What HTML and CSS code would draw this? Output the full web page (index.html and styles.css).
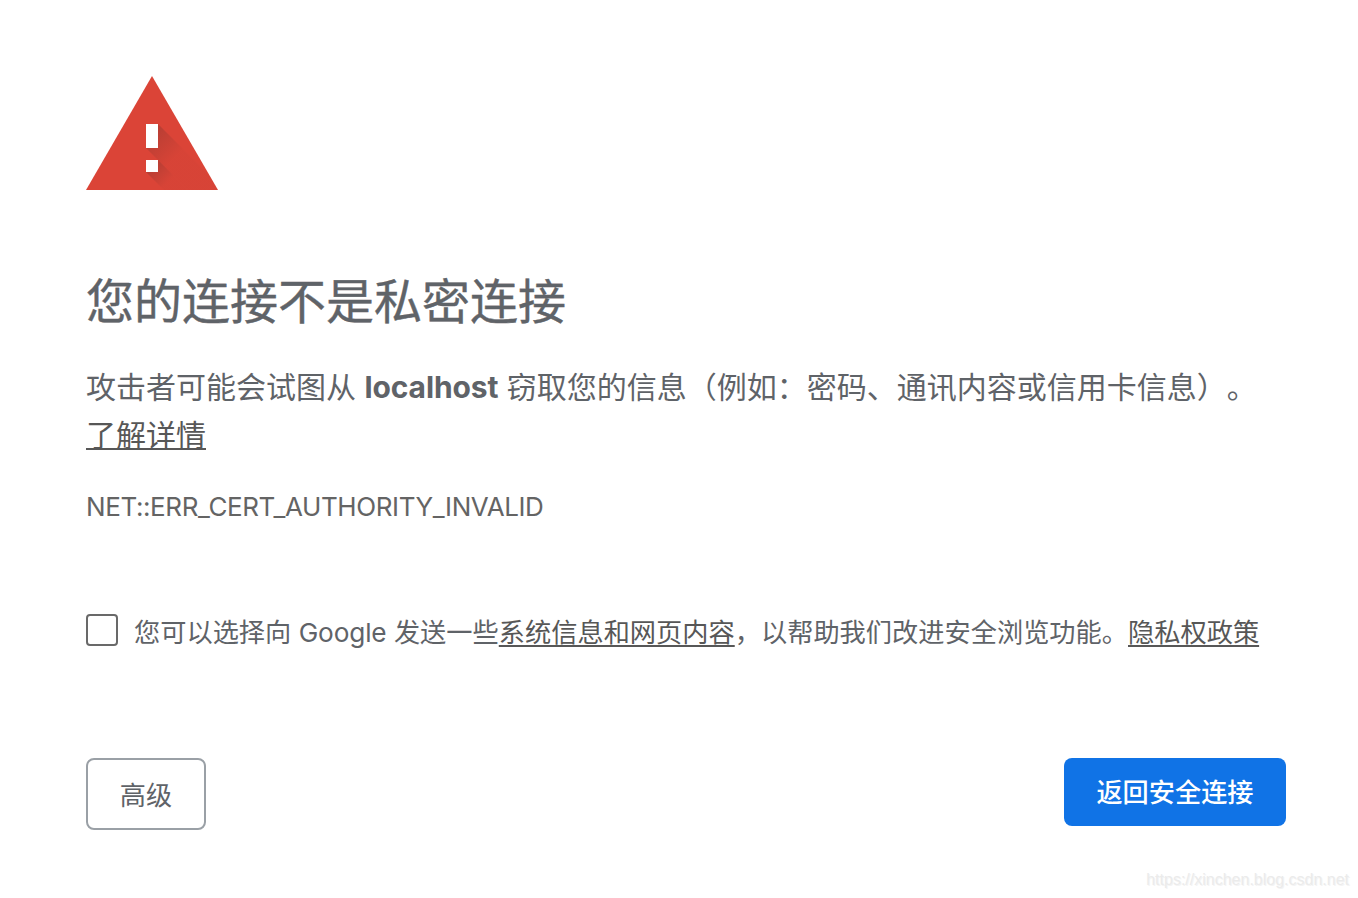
FILE: index.html
```
<!DOCTYPE html>
<html lang="zh-CN">
<head>
  <meta charset="UTF-8" />
  <meta name="viewport" content="width=device-width, initial-scale=1.0"/>
  <title>隐私设置错误</title>
  <link rel="stylesheet" href="styles.css">
</head>
<body>
  <div class="interstitial">
    <svg class="icon" viewBox="0 0 132 114" width="132" height="114">
      <defs>
        <linearGradient id="shade" gradientUnits="userSpaceOnUse" x1="66" y1="60" x2="88" y2="82">
          <stop offset="0" stop-color="#262626" stop-opacity="0.18"/>
          <stop offset="1" stop-color="#262626" stop-opacity="0.02"/>
        </linearGradient>
        <linearGradient id="shade-dot" gradientUnits="userSpaceOnUse" x1="66" y1="90" x2="82" y2="106">
          <stop offset="0" stop-color="#262626" stop-opacity="0.2"/>
          <stop offset="1" stop-color="#262626" stop-opacity="0.02"/>
        </linearGradient>
        <clipPath id="triangle">
          <path d="M0 114h132L66 0z"/>
        </clipPath>
      </defs>
      <path fill="#db4437" d="M0 114h132L66 0z"/>
      <g clip-path="url(#triangle)">
        <path fill="url(#shade)" d="M72 48l66 66H102L60 72z"/>
        <path fill="url(#shade-dot)" d="M72 84l30 30H78L60 96z"/>
      </g>
      <path fill="#fff" d="M60 48h12v24H60zM60 84h12v12H60z"/>
    </svg>

    <h1>您的连接不是私密连接</h1>
    <p class="message">攻击者可能会试图从 <strong>localhost</strong> 窃取您的信息（例如：密码、通讯内容或信用卡信息）。<a href="#">了解详情</a></p>
    <div class="error-code">NET::ERR_CERT_AUTHORITY_INVALID</div>

    <label class="opt-in">
      <input type="checkbox" />
      <span>您可以选择向 <span class="brand">Google</span> 发送一些<a href="#">系统信息和网页内容</a>，以帮助我们改进安全浏览功能。<a href="#">隐私权政策</a></span>
    </label>

    <div class="buttons">
      <button class="btn details">高级</button>
      <button class="btn primary">返回安全连接</button>
    </div>
  </div>
  <div class="watermark">https://xinchen.blog.csdn.net</div>
</body>
</html>
```

FILE: styles.css
```
* {
  margin: 0;
  padding: 0;
  box-sizing: border-box;
}
body {
  height: 898px;
  background: #fff;
  color: #5f6368;
  font-family: Inter, 'Noto Sans CJK SC', sans-serif;
  text-spacing-trim: space-all;
  overflow: hidden;
}
.interstitial {
  width: 1200px;
  margin-left: 86px;
  padding-top: 76px;
}
.icon {
  display: block;
}
h1 {
  margin-top: 73px;
  font-size: 48px;
  font-weight: 400;
  line-height: 78px;
  -webkit-text-stroke: 0.4px #5f6368;
}
a {
  color: #575757;
  text-decoration: underline;
  text-decoration-thickness: 2px;
  text-underline-offset: 2px;
  text-decoration-skip-ink: none;
}
.message {
  margin-top: 22px;
  font-size: 30px;
  line-height: 48px;
}
.message strong {
  letter-spacing: -0.1px;
}
.error-code {
  margin-top: 32px;
  color: #646464;
  font-size: 26px;
  line-height: 32px;
  letter-spacing: -0.4px;
}
.opt-in {
  display: flex;
  margin-top: 91px;
  font-size: 26.22px;
  line-height: 38px;
  white-space: nowrap;
}
.opt-in a {
  text-underline-offset: 3px;
}
.opt-in input {
  appearance: none;
  flex: none;
  width: 32px;
  height: 32px;
  margin-right: 16px;
  border: 2px solid #696969;
  border-radius: 4px;
}
.brand {
  letter-spacing: -0.15px;
}
.buttons {
  display: flex;
  justify-content: space-between;
  align-items: flex-start;
  margin-top: 106px;
}
.btn {
  border: none;
  border-radius: 8px;
  font-family: inherit;
  font-size: 26.2px;
  cursor: pointer;
}
.details {
  width: 120px;
  height: 72px;
  padding-bottom: 1px;
  border: 2px solid #9aa0a6;
  background: #fff;
  color: #5f6368;
}
.primary {
  width: 222px;
  height: 68px;
  padding-bottom: 2px;
  background: #1073e6;
  color: #fff;
  font-weight: 500;
}
.watermark {
  position: absolute;
  right: 9px;
  bottom: 9px;
  color: #ebebeb;
  font-family: 'Liberation Sans', sans-serif;
  font-size: 16px;
  line-height: 18px;
  text-shadow: 1px 1px 0 #f4f4f4;
}
```
